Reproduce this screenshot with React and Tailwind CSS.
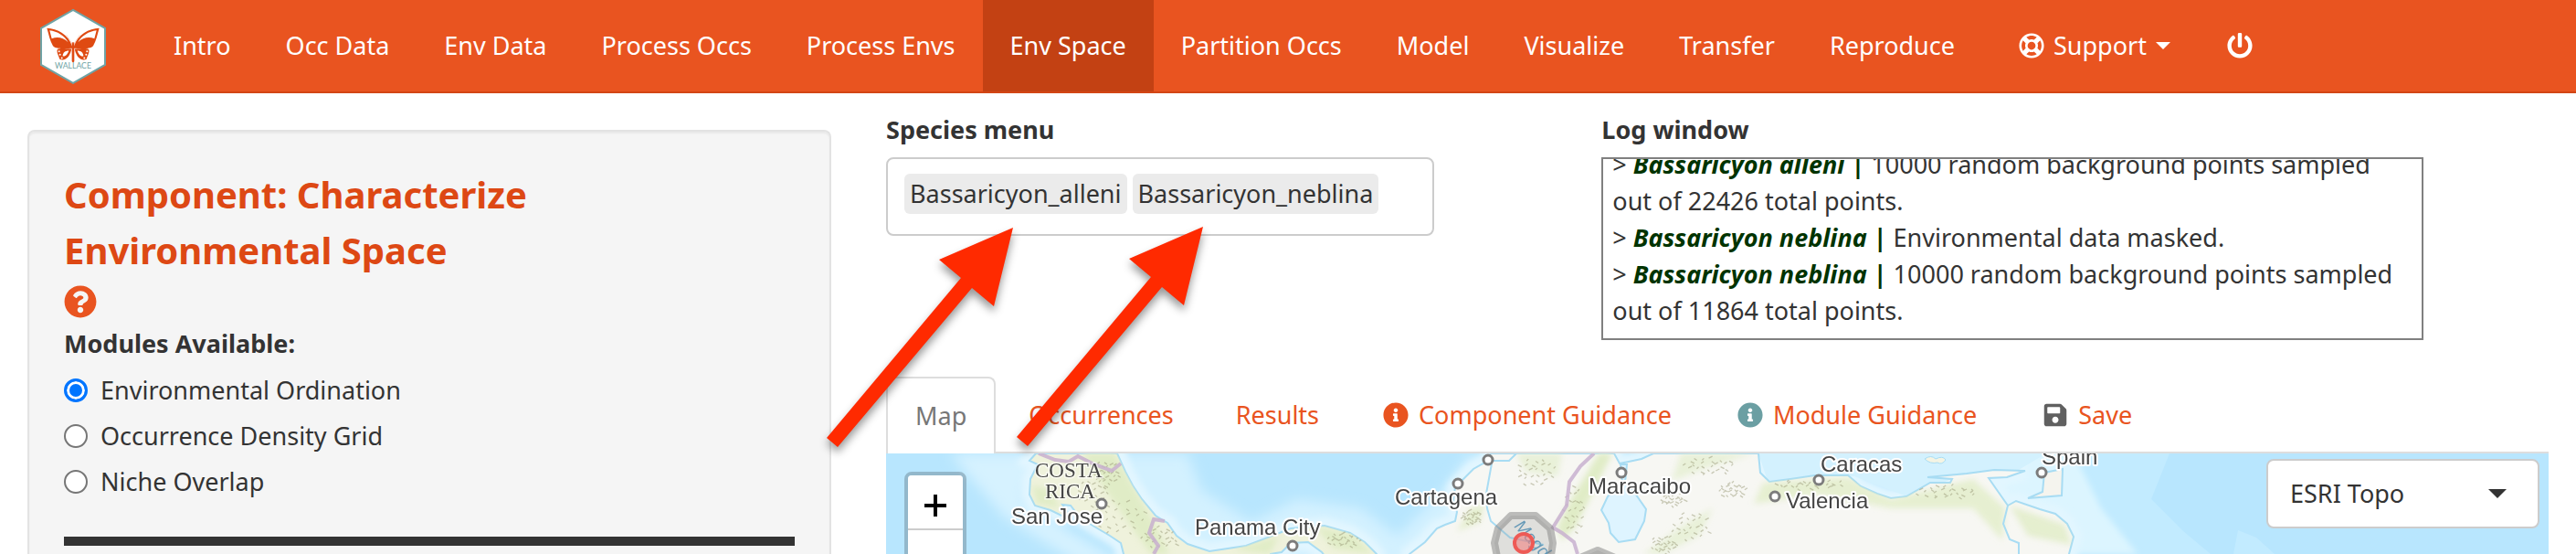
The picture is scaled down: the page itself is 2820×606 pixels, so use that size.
import React from 'react';
import { FaInfoCircle, FaSave, FaQuestionCircle, FaRegLifeRing, FaPowerOff } from 'react-icons/fa';

const NAV = ['Intro', 'Occ Data', 'Env Data', 'Process Occs', 'Process Envs', 'Env Space', 'Partition Occs', 'Model', 'Visualize', 'Transfer', 'Reproduce'];

const MODULES = ['Environmental Ordination', 'Occurrence Density Grid', 'Niche Overlap'];

const TABS = [
  { label: 'Map', active: true },
  { label: 'Occurrences' },
  { label: 'Results' },
  { label: 'Component Guidance', icon: <FaInfoCircle className="size-7" /> },
  { label: 'Module Guidance', icon: <FaInfoCircle className="size-7 text-[#6b9fa3]" /> },
  { label: 'Save', icon: <FaSave className="size-7 text-[#606060]" /> },
];

function Logo() {
  return (
    <svg viewBox="42 27 216 248" className="h-[83px] w-[72px] shrink-0" role="img" aria-label="Wallace">
      <polygon points="150,32 255,92 255,212 150,272 45,212 45,92" fill="#fff" stroke="#6fa3a5" strokeWidth="6" />
      <g fill="#df4a12">
        <path d="M64 92 C98 94 135 112 147 152 L147 158 C120 160 92 160 84 150 C74 134 70 112 64 92Z" />
        <path d="M236 92 C202 94 165 112 153 152 L153 158 C180 160 208 160 216 150 C226 134 230 112 236 92Z" />
        <path d="M144 160 C124 160 108 156 98 162 C96 174 102 180 106 194 C122 200 138 190 144 164Z" />
        <path d="M156 160 C176 160 192 156 202 162 C204 174 198 180 194 194 C178 200 162 190 156 164Z" />
        <rect x="146" y="138" width="8" height="66" rx="4" />
      </g>
      <path d="M73 99 C98 102 122 116 134 138 C116 120 96 120 80 126Z M227 99 C202 102 178 116 166 138 C184 120 204 120 220 126Z" fill="#fff" />
      <path d="M116 184 C126 186 132 176 136 166 C124 166 116 172 116 184Z M184 184 C174 186 168 176 164 166 C176 166 184 172 184 184Z" fill="#fff" />
      <g fill="#fff">
        <circle cx="104" cy="168" r="3" /><circle cx="107" cy="179" r="3" /><circle cx="113" cy="190" r="3" />
        <circle cx="196" cy="168" r="3" /><circle cx="193" cy="179" r="3" /><circle cx="187" cy="190" r="3" />
      </g>
      <path d="M147 142 L128 114 M153 142 L172 114" stroke="#f2b79f" strokeWidth="1.5" />
      <text x="150" y="226" textAnchor="middle" fontFamily="Lato, sans-serif" fontSize="26" fill="#6fa3a5">WALLACE</text>
    </svg>
  );
}

const RELIEF = [
  [225, 40, 18, 20], [255, 70, 30, 20], [300, 92, 22, 12], [240, 22, 14, 14], [500, 94, 20, 8],
  [710, 20, 22, 16], [752, 62, 12, 28], [900, 14, 30, 10], [880, 80, 22, 16], [850, 100, 14, 10],
  [925, 40, 16, 8], [1010, 34, 40, 5], [1160, 42, 34, 8], [640, 70, 12, 8], [860, 50, 14, 8],
];

function Relief() {
  const marks = [];
  RELIEF.forEach(([cx, cy, rx, ry], i) => {
    for (let k = 0; k < 26; k++) {
      const a = k * 2.4 + i;
      const r = Math.sqrt((k + 0.5) / 26);
      const x = cx + Math.cos(a) * rx * r;
      const y = cy + Math.sin(a) * ry * r;
      marks.push(`M${x.toFixed(1)} ${y.toFixed(1)}l${2 + (k % 3)} ${k % 2 ? 2 : -2}`);
    }
  });
  return <path d={marks.join('')} stroke="#9a9a78" strokeWidth="1.3" opacity="0.5" fill="none" />;
}

const SOUTH = 'M573 110 L590 97 L603 82 L612 78 L623 74 L625 64 L621 51 L623 37 L643 17 L657 9 L662 0 L797 0 L803 11 L808 10 L827 6 L840 0 L955 0 L957 21 L967 31 L990 28 L1017 24 L1053 24 L1067 36 L1085 44 L1100 49 L1117 47 L1143 32 L1165 32 L1167 28 L1140 26 L1183 22 L1213 18 L1247 19 L1227 26 L1207 27 L1228 57 L1237 52 L1263 61 L1280 66 L1293 77 L1300 91 L1295 110 L1295 400 L560 400Z';
const NORTH = 'M164 0 L157 8 L166 12 L158 28 L157 45 L163 57 L180 62 L192 68 L200 66 L193 56 L202 57 L212 70 L228 80 L245 90 L257 98 L260 110 L262 170 L400 200 L421 110 L433 108 L443 98 L462 97 L477 108 L490 125 L540 130 L537 110 L524 97 L508 87 L480 79 L443 82 L418 92 L394 101 L354 107 L330 99 L318 90 L308 76 L295 68 L280 50 L270 35 L262 20 L253 0Z';

const CITIES = [
  ['San Jose', 137, 77, 236, 55],
  ['Panama City', 338, 89, 445, 101],
  ['Cartagena', 557, 56, 626, 33],
  ['Maracaibo', 769, 44, 805, 21],
  ['Caracas', 1023, 20, 1021, 29],
  ['Valencia', 985, 60, 973, 47],
  ['Spain', 1265, 12, 1265, 21],
];

function TopoMap() {
  return (
    <svg viewBox="0 0 1820 110" preserveAspectRatio="xMinYMin slice" className="block h-full w-full" role="img" aria-label="Topographic map">
      <defs>
        <filter id="soft" x="-20%" y="-60%" width="140%" height="220%"><feGaussianBlur stdDeviation="7" /></filter>
        <filter id="softer" x="-20%" y="-60%" width="140%" height="220%"><feGaussianBlur stdDeviation="3" /></filter>
        <clipPath id="land"><path d={SOUTH} /><path d={NORTH} /></clipPath>
      </defs>
      <rect width="1820" height="400" fill="#b8e6fe" />
      <path d="M1280 0 L1405 0 L1385 50 L1420 85 L1450 110 L1250 110 L1200 0Z M1475 110 L1480 84 L1500 92 L1520 110Z" fill="#c2ebff" />
      <path d="M1200 0 L1300 0 L1330 60 L1370 110 L1230 110Z" fill="#dcf5ff" filter="url(#softer)" />
      <path d="M240 0 L330 0 L345 40 L400 75 L450 50 L520 60 L560 90 L610 40 L640 0 L680 20 L570 130 L440 120 L300 110Z" fill="#d3f1ff" filter="url(#soft)" />
      <path d="M70 0 L170 0 L150 50 L200 85 L260 120 L210 120 L130 70Z" fill="#d6f2ff" filter="url(#soft)" />
      <g fill="none" stroke="#e2f6ff" strokeWidth="18" filter="url(#softer)">
        <path d={SOUTH} /><path d={NORTH} />
      </g>
      <path d="M955 0 L1270 0 L1240 18 L1180 22 L1120 48 L1060 25 L965 30Z" fill="#d3f1fe" />
      <path d={SOUTH} fill="#f7f7f3" stroke="#a8dcf3" strokeWidth="2" />
      <path d={NORTH} fill="#eff2dc" stroke="#a8dcf3" strokeWidth="2" />
      <g clipPath="url(#land)">
        <g fill="#e0ecc6" filter="url(#softer)">
          <path d="M215 0 L250 0 L290 70 L310 110 L290 110 L240 40Z" />
          <path d="M160 35 L180 40 L190 60 L165 55Z M380 105 L430 90 L420 110Z M470 80 L510 88 L533 110 L490 104Z" />
          <path d="M780 0 L795 0 L775 40 L755 80 L740 95 L735 80 L750 50Z" />
          <path d="M690 0 L740 0 L735 25 L700 20Z M860 30 L900 15 L950 0 L870 0Z M870 80 L905 60 L890 90 L850 110 L830 110Z" opacity="0.6" />
          <path d="M960 32 L1053 26 L1100 50 L1190 28 L1225 60 L1222 95 L1190 60 L1100 60 L1020 45 L950 55Z" opacity="0.75" />
          <path d="M1230 57 L1290 78 L1298 100 L1250 90Z M640 60 L655 55 L650 75 L625 85Z" opacity="0.8" />
        </g>
        <Relief />
      </g>
      <path d="M804 12 L811 12 L809 32 L818 41 L832 61 L830 74 L820 94 L802 97 L793 87 L791 76 L783 62 L790 47 L806 32Z" fill="#def4ff" stroke="#a8dcf3" strokeWidth="2" />
      <path d="M663 11 L657 44 L658 60 L662 74 L683 92 L720 100 M662 8 L682 8 L690 0 M1228 57 L1223 77 L1230 94 L1240 98 L1240 110" fill="none" stroke="#a8dcf3" strokeWidth="2" />
      <path d="M1268 21 L1288 17 L1287 46 L1250 49 L1266 42Z" fill="#f5f4ee" stroke="#a8dcf3" strokeWidth="2" />
      <path d="M1137 6 q7 -5 12 0 q8 -4 11 1 q-4 6 -9 3 q-8 2 -14 -4Z" fill="#f4f4e4" stroke="#a8dcf3" />
      <g fill="none" stroke="#c8b0cf" strokeWidth="4" opacity="0.85">
        <path d="M167 0 L185 7 L200 9 L210 3 L228 12 L247 19 L257 11" />
        <path d="M305 74 L293 72 L288 87 L298 101 L293 110" />
        <path d="M775 0 L760 14 L748 31 L745 57 L730 81 L740 87 L753 97 L757 110" />
      </g>
      <g fontFamily="'Liberation Serif', serif" fontSize="23" fill="#444" stroke="#fff" strokeWidth="3" paintOrder="stroke" strokeOpacity="0.6">
        <text x="163" y="26">COSTA</text>
        <text x="174" y="49">RICA</text>
      </g>
      <g fontFamily="'Liberation Sans', sans-serif" fontSize="24" fill="#444" stroke="#fff" strokeWidth="4" paintOrder="stroke" strokeLinejoin="round">
        {CITIES.map(([name, x, y]) => <text key={name} x={x} y={y}>{name}</text>)}
      </g>
      <g fill="#fff" stroke="#7c7c7c" strokeWidth="3">
        {CITIES.map(([name, , , x, y]) => <circle key={name} cx={x} cy={y} r="5" />)}
        <circle cx="659" cy="7" r="5" />
      </g>
      <text x="687" y="80" transform="rotate(48 687 80)" fontFamily="'Liberation Sans', sans-serif" fontStyle="italic" fontSize="19" fill="#5f9fc4">Magd</text>
      <g fill="#808080" fillOpacity="0.2" stroke="#808080" strokeOpacity="0.5" strokeWidth="8" strokeLinejoin="round">
        <polygon points="684,68 711,68 727,82 730,98 727,118 711,132 684,132 670,118 666,98 670,82" />
        <polygon points="779,106 798,114 806,134 798,154 760,154 752,134 760,114" />
      </g>
      <circle cx="698" cy="98" r="10" fill="#f08080" fillOpacity="0.6" stroke="#ee5a55" strokeWidth="4" />
    </svg>
  );
}

function Arrows() {
  const d = 'M209 9 L128 44 L152 64 L5 239 L17 249 L164 75 L188 95Z';
  return (
    <svg viewBox="0 0 440 280" className="pointer-events-none absolute top-[138px] -left-10 z-10 h-[280px] w-[440px] overflow-visible" aria-hidden="true">
      <g fill="#ff2a00" className="drop-shadow-[0_6px_5px_rgba(0,0,0,0.4)]">
        <path d={d} />
        <path d={d} transform="translate(208 -1)" />
      </g>
    </svg>
  );
}

function Species({ children }) {
  return <b className="text-[#003300]"><i>{children}</i> | </b>;
}

export default function App() {
  return (
    <div className="flex h-screen flex-col overflow-hidden bg-white font-['Noto_Sans',sans-serif] text-[27px] leading-10 text-[#333]">
      <nav className="flex shrink-0 items-center border-b-2 border-[#d34615] bg-[#e95420] pl-11 text-white">
        <Logo />
        <div className="ml-11 flex">
          {NAV.map((n) => (
            <a key={n} href="#" className={'px-[30px] py-[30px] whitespace-nowrap ' + (n === 'Env Space' ? 'bg-[#c34113]' : '')}>{n}</a>
          ))}
          <a href="#" className="ml-2 flex items-center gap-[10px] px-8 py-[30px] whitespace-nowrap">
            <FaRegLifeRing className="size-7" />
            Support
            <svg viewBox="0 0 16 8" className="h-2 w-4" aria-hidden="true"><path d="M0 0H16L8 8Z" fill="#fff" /></svg>
          </a>
          <a href="#" aria-label="Quit" className="flex items-center px-[30px] py-[30px]"><FaPowerOff className="size-7" /></a>
        </div>
      </nav>

      <div className="flex min-h-0 flex-1">
        <aside className="flex w-1/3 shrink-0 px-[30px] pt-10">
          <form className="w-full rounded-t-lg border-2 border-b-0 border-[#e3e3e3] bg-[#f5f5f5] p-[38px] shadow-[inset_0_2px_2px_rgba(0,0,0,0.05)]">
            <h1 className="text-[40px] leading-[61px] font-bold text-[#dd4814]">Component: Characterize<br />Environmental Space</h1>
            <button type="button" aria-label="Help" className="mt-2 block text-[#e95420]"><FaQuestionCircle className="size-9" /></button>
            <fieldset className="mt-2">
              <legend className="font-bold">Modules Available:</legend>
              <div className="mt-[11px] flex flex-col gap-[10px]">
                {MODULES.map((m, i) => (
                  <label key={m} className="flex items-center gap-[14px]">
                    <input type="radio" name="module" defaultChecked={i === 0} className="size-[26px] appearance-none rounded-full border-2 border-[#767676] bg-white checked:border-[3px] checked:border-[#0075ff] checked:bg-[#0075ff] checked:shadow-[inset_0_0_0_3px_#fff]" />
                    {m}
                  </label>
                ))}
              </div>
            </fieldset>
            <hr className="mt-10 border-t-10 border-[#333]" />
          </form>
        </aside>

        <main className="relative flex min-w-0 flex-1 flex-col pt-5">
          <Arrows />
          <div className="flex h-[290px] shrink-0">
            <section className="w-5/12 px-[30px]">
              <h2 className="font-bold">Species menu</h2>
              <div className="mt-[10px] flex h-[86px] max-w-[600px] items-start gap-[6px] rounded-lg border-2 border-[#ccc] px-[18px] py-4">
                <span className="rounded-md bg-[#ebebeb] px-[6px] py-[2px] whitespace-nowrap">Bassaricyon_alleni</span>
                <span className="rounded-md bg-[#ebebeb] px-[6px] py-[2px] whitespace-nowrap">Bassaricyon_neblina</span>
              </div>
            </section>
            <section className="flex-1 px-[30px]">
              <h2 className="font-bold">Log window</h2>
              <div className="mt-[10px] flex h-[200px] max-w-[900px] flex-col justify-end overflow-hidden border-2 border-[#808080] px-[10px] pb-[10px]">
                <p>&gt; <Species>Bassaricyon alleni</Species>10000 random background points sampled<br />out of 22426 total points.</p>
                <p>&gt; <Species>Bassaricyon neblina</Species>Environmental data masked.</p>
                <p>&gt; <Species>Bassaricyon neblina</Species>10000 random background points sampled<br />out of 11864 total points.</p>
              </div>
            </section>
          </div>

          <div role="tablist" className="mx-[30px] flex shrink-0 gap-1 border-b-2 border-[#ddd]">
            {TABS.map((t) => (
              <button
                key={t.label}
                type="button"
                role="tab"
                aria-selected={!!t.active}
                className={'flex items-center gap-[11px] rounded-t-lg border-2 border-b-0 py-5 whitespace-nowrap ' + (t.icon ? 'px-8 ' : 'px-[30px] ') + (t.active ? '-mb-[2px] border-[#ddd] bg-white text-[#777]' : 'border-transparent text-[#e95420]')}
              >
                {t.icon}
                {t.label}
              </button>
            ))}
          </div>

          <div className="relative mx-[30px] min-h-0 flex-1 overflow-hidden bg-[#b8e6fe]">
            <TopoMap />
            <div className="absolute top-5 left-5 flex flex-col rounded-lg border-4 border-black/20 bg-clip-padding">
              <button type="button" aria-label="Zoom in" className="flex h-[60px] w-[60px] items-center justify-center rounded-t-[4px] border-b-2 border-[#ccc] bg-white">
                <svg viewBox="0 0 26 26" className="mt-2 size-[26px]" aria-hidden="true"><path d="M13 1V25M1 13H25" stroke="#000" strokeWidth="4" /></svg>
              </button>
              <button type="button" aria-label="Zoom out" className="h-[60px] w-[60px] rounded-b-[4px] bg-white" />
            </div>
            <div className="absolute top-[6px] right-[10px] flex w-[299px] items-center">
              <select aria-label="Basemap" className="h-19 w-full appearance-none rounded-lg border-2 border-[#ccc] bg-white pl-6 text-[#333]">
                <option>ESRI Topo</option>
              </select>
              <svg viewBox="0 0 20 10" className="pointer-events-none absolute right-9 h-[10px] w-5" aria-hidden="true"><path d="M0 0H20L10 10Z" fill="#333" /></svg>
            </div>
          </div>
        </main>
      </div>
    </div>
  );
}
